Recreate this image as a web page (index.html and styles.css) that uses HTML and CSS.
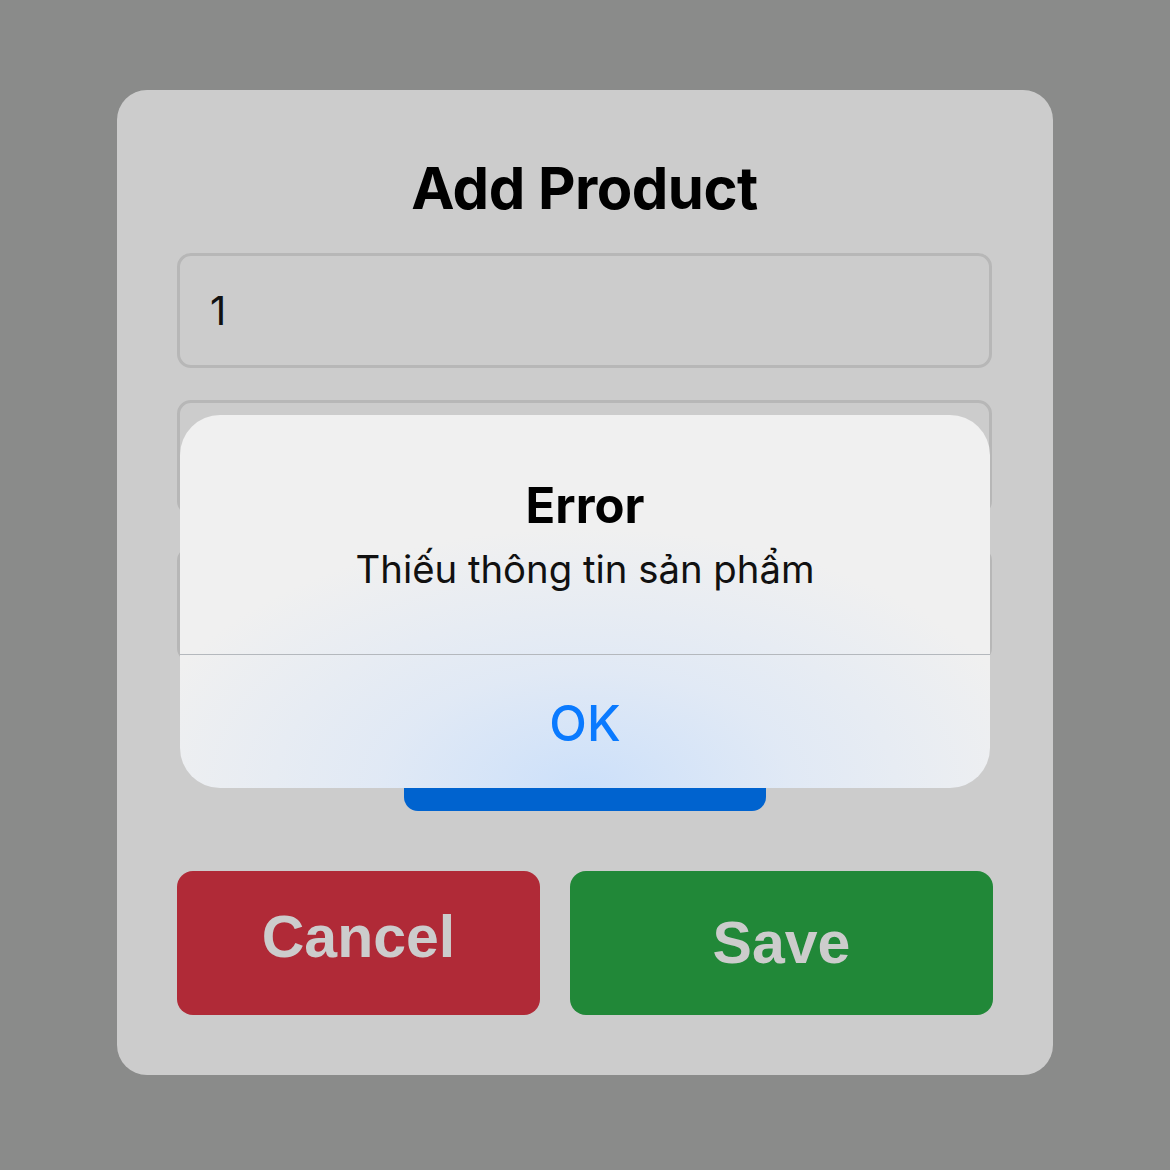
FILE: index.html
```html
<!DOCTYPE html>
<html>
<head>
<meta charset="utf-8">
<link rel="stylesheet" href="styles.css">
</head>
<body>
<div class="screen">
  <div class="card">
    <h1 class="title">Add Product</h1>
    <div class="field">1</div>
    <div class="field"></div>
    <div class="field"></div>
    <div class="pick"></div>
    <div class="actions">
      <div class="btn cancel">Cancel</div>
      <div class="btn save">Save</div>
    </div>
    <div class="alert">
      <div class="alert-body">
        <div class="alert-title">Error</div>
        <div class="alert-msg">Thiếu thông tin sản phẩm</div>
      </div>
      <div class="alert-btn">OK</div>
    </div>
  </div>
</div>
</body>
</html>
```
FILE: styles.css
```css
* { box-sizing: border-box; }
html, body { margin: 0; padding: 0; }
body { background: #8a8b8a; width: 1170px; height: 1170px; font-family: Inter, "Noto Sans", sans-serif; }
.screen { padding: 90px 117px 0 117px; }
.card {
  position: relative;
  width: 936px;
  height: 985px;
  background: #cccccc;
  border-radius: 30px;
  padding: 60px 61px 60px 60px;
  display: flex;
  flex-direction: column;
}
.title {
  margin: 0;
  height: 103px;
  font-size: 58px;
  font-weight: 700;
  text-align: center;
  color: #000;
  line-height: 76px;
  letter-spacing: -0.5px;
}
.field {
  height: 115px;
  border: 3px solid #b7b7b7;
  border-radius: 14px;
  margin-bottom: 32px;
  padding-left: 30px;
  font-size: 40px;
  line-height: 109px;
  color: #111;
}
.pick {
  align-self: center;
  width: 362px;
  height: 115px;
  margin-top: 2px;
  background: #0063cf;
  border-radius: 14px;
}
.actions {
  display: flex;
  gap: 30px;
  margin-top: 60px;
  margin-right: -1px;
}
.btn {
  height: 144px;
  border-radius: 16px;
  display: flex;
  align-items: center;
  justify-content: center;
  font-family: "Liberation Sans", Arial, sans-serif;
  font-weight: 700;
  font-size: 59px;
  color: #cccccc;
}
.cancel { width: 363px; background: #b02a37; padding-bottom: 12px; }
.save { flex: 1; background: #218838; }
.alert {
  position: absolute;
  left: 63px;
  top: 325px;
  width: 810px;
  height: 373px;
  border-radius: 40px;
  overflow: hidden;
  background:
    radial-gradient(ellipse 460px 260px at 50% 100%, rgba(204,224,250,1) 0%, rgba(222,232,246,0.85) 45%, rgba(240,240,240,0) 100%),
    #f0f0f0;
  display: flex;
  flex-direction: column;
}
.alert-body {
  height: 240px;
  border-bottom: 1px solid #b4b8bd;
  text-align: center;
  padding-top: 63px;
}
.alert-title {
  font-size: 49px;
  font-weight: 700;
  color: #000;
  line-height: 56px;
}
.alert-msg {
  font-size: 38.3px;
  color: #111;
  line-height: 50px;
  margin-top: 10px;
}
.alert-btn {
  flex: 1;
  display: flex;
  align-items: center;
  justify-content: center;
  font-size: 49px;
  font-weight: 500;
  color: #0a7aff;
  padding-top: 4px;
}
```
